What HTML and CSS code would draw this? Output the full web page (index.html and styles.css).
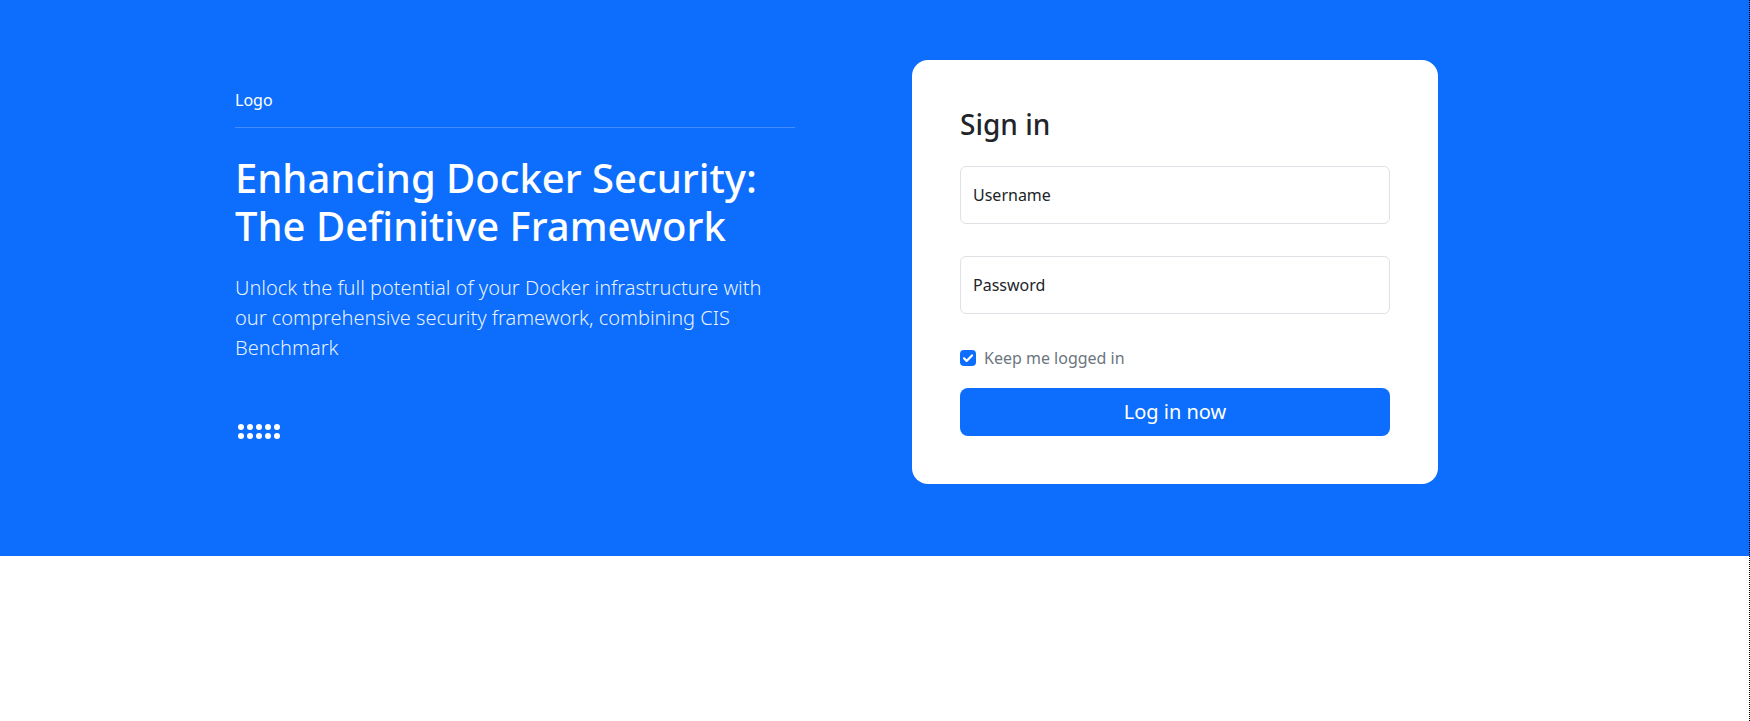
FILE: index.html
```html
<!DOCTYPE html>
<html lang="en">
<head>
<meta charset="utf-8">
<title>Sign in</title>
<link rel="stylesheet" href="styles.css">
</head>
<body>
<section class="hero">
  <div class="hero-inner">
    <div class="intro">
      <div class="logo">Logo</div>
      <hr class="divider">
      <h1 class="title">Enhancing Docker Security:<br>The Definitive Framework</h1>
      <p class="lead">Unlock the full potential of your Docker infrastructure with our comprehensive security framework, combining CIS Benchmark</p>
      <div class="dots">
        <span></span><span></span><span></span><span></span><span></span>
        <span></span><span></span><span></span><span></span><span></span>
      </div>
    </div>
    <div class="card">
      <h3 class="card-title">Sign in</h3>
      <div class="field field-user"><input type="text" class="input" placeholder="Username"></div>
      <div class="field field-pass"><input type="password" class="input" placeholder="Password"></div>
      <label class="check">
        <span class="check-box">
          <svg viewBox="0 0 16 16" width="16" height="16"><path d="M4 8.3l2.6 2.6L12 5.4" fill="none" stroke="#fff" stroke-width="2.2" stroke-linecap="round" stroke-linejoin="round"/></svg>
        </span>
        <span class="check-label">Keep me logged in</span>
      </label>
      <button class="btn" type="button">Log in now</button>
    </div>
  </div>
</section>
<div class="edge"></div>
</body>
</html>
```
FILE: styles.css
```css
html, body {
  margin: 0;
  padding: 0;
}
body {
  font-family: "Noto Sans", "Liberation Sans", sans-serif;
  font-size: 16px;
  line-height: 1.5;
  color: #212529;
  background: #fff;
}
.hero {
  background: #0d6efd;
  padding: 60px 0 72px;
}
.hero-inner {
  display: flex;
  align-items: flex-start;
  padding-left: 235px;
  gap: 117px;
}
.intro {
  width: 560px;
  padding-top: 28px;
  color: #fff;
}
.logo {
  font-size: 16px;
  line-height: 24px;
}
.divider {
  border: 0;
  border-top: 1px solid rgba(255, 255, 255, 0.22);
  margin: 15px 0 26px;
  height: 0;
}
.title {
  font-size: 40px;
  line-height: 48px;
  font-weight: 500;
  margin: 0 0 23px;
}
.lead {
  font-size: 20px;
  line-height: 30px;
  font-weight: 300;
  margin: 0;
  color: rgba(255, 255, 255, 0.92);
}
.dots {
  display: grid;
  grid-template-columns: repeat(5, 6px);
  grid-auto-rows: 6px;
  gap: 3px;
  margin: 61px 0 0 3px;
}
.dots span {
  width: 6px;
  height: 6px;
  border-radius: 50%;
  background: #fff;
}
.card {
  width: 526px;
  box-sizing: border-box;
  background: #fff;
  border-radius: 16px;
  padding: 48px;
}
.card-title {
  font-size: 28px;
  line-height: 1.2;
  font-weight: 500;
  margin: 0 0 24px;
  color: #212529;
}
.field {
  margin-bottom: 32px;
}
.input {
  display: block;
  width: 100%;
  box-sizing: border-box;
  height: 58px;
  padding: 0 12px;
  border: 1px solid #dee2e6;
  border-radius: 6px;
  font-family: inherit;
  font-size: 16px;
  color: #212529;
  background: #fff;
  outline: none;
}
.input::placeholder {
  color: #212529;
  opacity: 1;
}
.check {
  display: flex;
  align-items: center;
  height: 24px;
  margin-bottom: 18px;
  cursor: pointer;
}
.check-box {
  width: 16px;
  height: 16px;
  border-radius: 4px;
  background: #0d6efd;
  display: flex;
  align-items: center;
  justify-content: center;
  margin-right: 8px;
}
.check-box svg {
  display: block;
}
.check-label {
  color: #6c757d;
  font-size: 16px;
}
.btn {
  display: block;
  width: 100%;
  height: 48px;
  border: 0;
  border-radius: 8px;
  background: #0d6efd;
  color: #fff;
  font-family: inherit;
  font-size: 20px;
  line-height: 30px;
  cursor: pointer;
}
.edge {
  position: fixed;
  top: 0;
  right: 0;
  bottom: 0;
  width: 0;
  border-right: 1px dotted #000;
}
```
